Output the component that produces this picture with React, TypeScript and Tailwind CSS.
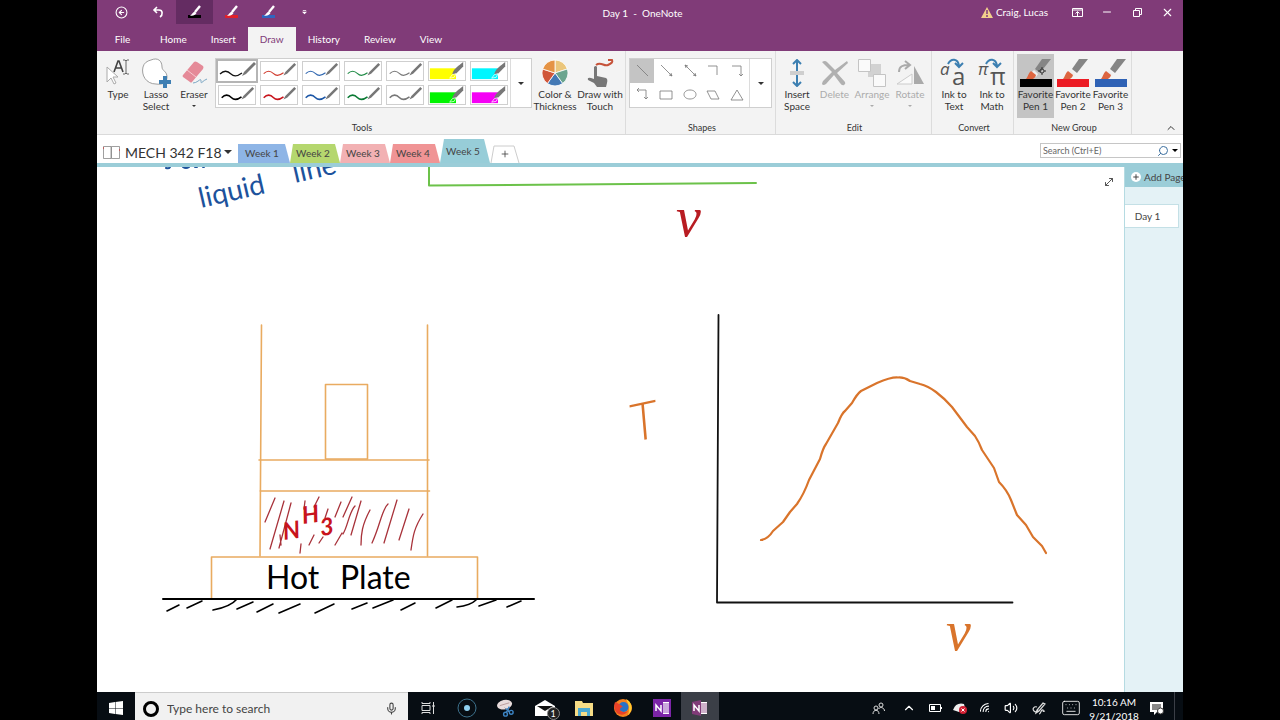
import React, { FunctionComponent, ReactNode } from "react";
import {
  ChevronUp,
  CircleArrowLeft,
  Keyboard,
  Mic,
  Minus,
  MoveDiagonal,
  Plus,
  Search,
  Volume2,
  Wifi,
  X,
} from "lucide-react";

const menuTabs = ["Home", "Insert", "Draw", "History", "Review", "View"];

const pens = [
  { color: "#111111", width: 1 },
  { color: "#d0392b", width: 1 },
  { color: "#2f66b0", width: 1 },
  { color: "#1d8a44", width: 1 },
  { color: "#777777", width: 1 },
  { color: "#ffff00", width: 0 },
  { color: "#00f6ff", width: 0 },
  { color: "#000000", width: 2 },
  { color: "#c8141c", width: 2 },
  { color: "#1b56a6", width: 2 },
  { color: "#0a7a34", width: 2 },
  { color: "#777777", width: 2 },
  { color: "#00f400", width: 0 },
  { color: "#f500f5", width: 0 },
];

const shapes = [
  "M7 6l11 11",
  "M7 6l11 11M17 14l1 3-3-1",
  "M7 6l11 11M17 14l1 3-3-1M8 9L7 6l3 1",
  "M7 7h9v9",
  "M7 7h9v10M14 15l2 2 2-2",
  "M7 7h9v9M9 5L7 7l2 2M14 14l2 2 2-2",
  "M6 8h12v8H6z",
  "M12 7c8 0 8 9 0 9s-8-9 0-9z",
  "M6 8h8l4 8h-8z",
  "M12 7l6 10H6z",
];

const weekTabs = [
  {
    label: "Week 1",
    className: "h-[19px] w-[52px] bg-[#8eb5e6] [clip-path:polygon(0_0,47px_0,100%_100%,0_100%)]",
  },
  {
    label: "Week 2",
    className: "h-[19px] w-[50px] bg-[#b5d76e] [clip-path:polygon(3px_0,45px_0,100%_100%,0_100%)]",
  },
  {
    label: "Week 3",
    className: "h-[19px] w-[50px] bg-[#f2b1b3] [clip-path:polygon(3px_0,45px_0,100%_100%,0_100%)]",
  },
  {
    label: "Week 4",
    className: "h-[19px] w-[50px] bg-[#f09495] [clip-path:polygon(3px_0,45px_0,100%_100%,0_100%)]",
  },
  {
    label: "Week 5",
    className: "h-6 w-[50px] bg-[#97cdd8] [clip-path:polygon(4px_0,44px_0,100%_100%,0_100%)]",
  },
];

const Caret: FunctionComponent<{ className?: string }> = ({ className }) => (
  <svg viewBox="0 0 8 4" className={className ?? "h-[3px] w-[6px]"}>
    <path d="M0 0h8L4 4z" fill="currentColor" />
  </svg>
);

const QuickPen: FunctionComponent<{ color: string }> = ({ color }) => (
  <svg viewBox="0 0 16 14" className="h-[14px] w-4">
    <rect x="1" y="10" width="13" height="3" fill={color} />
    <path d="M13 1l-5 6" stroke="#fff" strokeWidth="2.4" />
    <path d="M7.500 6.500l2 1.500C8 10.500 6 11 3 10.500c2-.8 2.500-3 4.500-4z" fill="#fff" />
  </svg>
);

const TitleBar: FunctionComponent = () => (
  <div className="flex h-[27px] items-start text-[10px] text-white">
    <div className="flex flex-1 pl-[5px]">
      <button aria-label="Back" className="flex h-6 w-[38px] items-center justify-center">
        <CircleArrowLeft size={13} strokeWidth={2} />
      </button>
      <button aria-label="Undo" className="flex h-6 w-9 items-center justify-center">
        <svg viewBox="0 0 12 12" className="h-3 w-3" fill="none" stroke="#fff" strokeWidth="1.600">
          <path d="M5 1L2 4l3 3M2 4h5c4 0 4 5 1 7" />
        </svg>
      </button>
      <button aria-label="Black pen" className="flex h-6 w-[37px] items-center justify-center bg-[#642c62]">
        <QuickPen color="#000" />
      </button>
      <button aria-label="Red pen" className="flex h-6 w-[37px] items-center justify-center">
        <QuickPen color="#e0202a" />
      </button>
      <button aria-label="Blue pen" className="flex h-6 w-[37px] items-center justify-center">
        <QuickPen color="#2f66c0" />
      </button>
      <button aria-label="Customize toolbar" className="flex h-6 w-[35px] items-center justify-center">
        <svg viewBox="0 0 6 6" className="h-[5px] w-[5px]" fill="#fff">
          <path d="M1 0h4v1H1zM0 2h6L3 5z" />
        </svg>
      </button>
    </div>
    <h1 className="pt-[5px] leading-4 whitespace-pre">Day 1  -  OneNote</h1>
    <div className="flex flex-1 justify-end">
      <div className="mr-[14px] flex h-6 items-center gap-[3px]">
        <svg viewBox="0 0 12 11" className="h-[11px] w-3">
          <path d="M6 0l6 11H0z" fill="#f3cf8c" />
          <path d="M6 3v4M6 8v2" stroke="#803b78" strokeWidth="1.500" />
        </svg>
        Craig, Lucas
      </div>
      <button aria-label="Ribbon display options" className="flex h-6 w-[30px] items-center justify-center">
        <svg viewBox="0 0 11 9" className="h-[9px] w-[11px]" fill="none" stroke="#fff">
          <path d="M.5.5h10v8H.5zM0 2h11M5.500 8V4M3.500 5.500l2-2 2 2" />
        </svg>
      </button>
      <button aria-label="Minimize" className="flex h-6 w-[30px] items-center justify-center">
        <Minus size={12} strokeWidth={2} />
      </button>
      <button aria-label="Restore" className="flex h-6 w-[30px] items-center justify-center">
        <svg viewBox="0 0 9 9" className="h-[9px] w-[9px]" fill="none" stroke="#fff">
          <path d="M.5 2.500h6v6h-6zM2.500 2.500v-2h6v6h-2" />
        </svg>
      </button>
      <button aria-label="Close" className="flex h-6 w-[31px] items-center justify-center">
        <X size={13} strokeWidth={2} />
      </button>
    </div>
  </div>
);

const MenuBar: FunctionComponent = () => (
  <nav className="flex h-6 text-[10px] text-white">
    <button className="w-[51px]">File</button>
    {menuTabs.map((tab) => (
      <button
        key={tab}
        className={tab === "Draw" ? "bg-[#f3f3f3] px-3 text-[#803b78]" : "px-3"}
      >
        {tab}
      </button>
    ))}
  </nav>
);

type ToolProps = {
  lines: string[];
  icon: ReactNode;
  className?: string;
  caret?: boolean;
};

const Tool: FunctionComponent<ToolProps> = ({ lines, icon, className, caret }) => (
  <button className={`flex h-16 flex-col items-center pt-[3px] text-[10px] leading-3 ${className ?? "w-[38px]"}`}>
    <span className="flex h-[31px] items-center justify-center">{icon}</span>
    {lines.map((line) => (
      <span key={line} className="whitespace-nowrap">
        {line}
      </span>
    ))}
    {caret && <Caret className="mt-[5px] h-[2px] w-1" />}
  </button>
);

const Group: FunctionComponent<{ label: string; children: ReactNode; className?: string }> = ({
  label,
  children,
  className,
}) => (
  <section className={`flex flex-col border-r border-[#dcdcdc] pt-[3px] ${className ?? ""}`}>
    <div className="flex flex-1 items-start">{children}</div>
    <h2 className="text-center text-[9px] leading-3">{label}</h2>
  </section>
);

const PenSwatch: FunctionComponent<{ color: string; width: number }> = ({ color, width }) => (
  <svg viewBox="0 0 38 20" className="h-full w-full">
    {width > 0 ? (
      <>
        <path
          d="M2 13c5-5 9-2 11 0 3 3 7 2 11-1"
          fill="none"
          stroke={color}
          strokeWidth={width === 1 ? 1.2 : 1.8}
        />
        <path d="M24 15l2-4L36 1l2 2-10 10z" fill="#777" />
      </>
    ) : (
      <>
        <path d="M0 7h29v12H0z" fill={color} />
        <path d="M25 14c0-4 3-7 12-14v5l-8 8z" fill="#777" />
        <path d="M22 18l3-4 4-1-2 4z" fill={color} stroke="#fff" strokeWidth=".8" />
      </>
    )}
  </svg>
);

const FavoritePen: FunctionComponent<{ color: string; gear?: boolean }> = ({ color, gear }) => (
  <svg viewBox="0 0 32 30" className="h-[30px] w-8">
    <path d="M22 1h9L20 15l-5-4z" fill="#858585" />
    <path d="M14 12l4 4-2 3-5-4z" fill="#eee" />
    <path d="M11 13l5 4c-1 4-5 6-11 5 3-2 3-7 6-9z" fill="#dd6540" />
    <rect y="21" width="32" height="8" fill={color} />
    {gear && (
      <g stroke="#333" fill="none">
        <circle cx="22" cy="13" r="2" />
        <path d="M22 9v2M22 15v2M18 13h2M24 13h2" />
      </g>
    )}
  </svg>
);

const ConvertIcon: FunctionComponent<{ letter: string }> = ({ letter }) => (
  <svg viewBox="0 0 32 30" className="h-[30px] w-8 overflow-visible">
    <g fill="#555" className="font-['Open_Sans',sans-serif]">
      <text x="2" y="17" className="text-[17px] italic">{letter}</text>
      <text x="14" y="27" className="text-[24px]">{letter}</text>
    </g>
    <path d="M10 6c3-6 10-6 11 2M17 5l4 4 4-4" fill="none" stroke="#3c7fb1" strokeWidth="2" />
  </svg>
);

const Ribbon: FunctionComponent = () => (
  <div className="flex h-[84px] border-b border-[#dadada] bg-[#f3f3f3] text-[#333]">
    <Group label="Tools" className="w-[529px] pl-[2px]">
      <Tool
        lines={["Type"]}
        icon={
          <svg viewBox="0 0 26 28" className="h-7 w-[26px]">
            <path d="M2 8v15l4-4 3 6 2-1-3-6h5z" fill="#fff" stroke="#aaa" />
            <path d="M9 13l4-11h1l4 11M11 9h5" fill="none" stroke="#444" strokeWidth="1.600" />
            <path d="M18 1h2l1 1 1-1h2M21 2v12M18 15h2l1-1 1 1h2" fill="none" stroke="#666" />
          </svg>
        }
      />
      <Tool
        lines={["Lasso", "Select"]}
        icon={
          <svg viewBox="0 0 30 30" className="h-[30px] w-[30px]">
            <path
              d="M10 2c7-3 11 1 11 7 0 4 5 4 5 10s-5 8-11 7C5 26 0 17 2 9c1-4 4-6 8-7z"
              fill="#fff"
              stroke="#888"
              strokeWidth=".8"
            />
            <path d="M24 18v12M18 24h12" stroke="#3f7fb3" strokeWidth="4" />
          </svg>
        }
      />
      <Tool
        lines={["Eraser"]}
        caret
        icon={
          <svg viewBox="0 0 28 28" className="h-7 w-7">
            <path d="M14 3q1-1 3 0l6 4q1 1 0 3L12 23q-1 1-2 0l-7-5q-1-1 0-2z" fill="#e58a98" />
            <path d="M7 11l9 7" stroke="#f6c8cf" />
            <path d="M13 24c5 0 8-6 8-2s1 0 6-2" fill="none" stroke="#7ba7c4" />
          </svg>
        }
      />
      <div className="mt-1 ml-[2px] flex h-[50px] w-[317px] shrink-0 border border-[#cfcfcf] bg-white">
        <div className="grid flex-1 grid-cols-7 grid-rows-2">
          {pens.map((pen, i) => (
            <button
              key={i}
              aria-label={`Pen ${i + 1}`}
              className={
                i === 0
                  ? "border-2 border-[#b5b5b5] bg-white"
                  : "m-[2px] border border-[#cfcfcf] bg-white"
              }
            >
              <PenSwatch color={pen.color} width={pen.width} />
            </button>
          ))}
        </div>
        <button aria-label="More pens" className="flex w-[21px] items-center justify-center border-l border-[#dcdcdc]">
          <Caret />
        </button>
      </div>
      <Tool
        lines={["Color &", "Thickness"]}
        className="w-[46px]"
        icon={
          <svg viewBox="-14 -14 28 28" className="h-7 w-7" stroke="#fff" strokeWidth=".8">
            <path d="M0 0V-13A13 13 0 0 1 12.400-4z" fill="#ebc67b" />
            <path d="M0 0L12.400-4A13 13 0 0 1 7.600 10.500z" fill="#6ba58e" />
            <path d="M0 0L7.600 10.500A13 13 0 0 1-7.600 10.500z" fill="#4479b5" />
            <path d="M0 0L-7.600 10.500A13 13 0 0 1-12.400-4z" fill="#d0563a" />
            <path d="M0 0L-12.400-4A13 13 0 0 1 0-13z" fill="#e59345" />
          </svg>
        }
      />
      <Tool
        lines={["Draw with", "Touch"]}
        className="w-11"
        icon={
          <svg viewBox="0 0 28 30" className="h-[30px] w-7">
            <path d="M8 9q2-2 3 0v9l9 2q2 1 1 5l-1 4h-9l-3-4-6-3q-1-3 3-2l3 1z" fill="#777" />
            <path d="M10 7c5-4 8 2 12 0s5-3 4-5h-4" fill="none" stroke="#c6533a" strokeWidth="2" />
          </svg>
        }
      />
    </Group>

    <Group label="Shapes" className="w-[150px] pl-[3px]">
      <div className="mt-1 flex h-[50px] w-[143px] border border-[#cfcfcf] bg-white">
        <div className="grid flex-1 grid-cols-5 grid-rows-2">
          {shapes.map((d, i) => (
            <button key={d} aria-label={`Shape ${i + 1}`} className={i === 0 ? "bg-[#c4c4c4]" : ""}>
              <svg viewBox="0 0 24 24" className="h-6 w-6" fill="none" stroke="#777" strokeWidth=".8">
                <path d={d} />
              </svg>
            </button>
          ))}
        </div>
        <button aria-label="More shapes" className="flex w-[22px] items-center justify-center border-l border-[#dcdcdc]">
          <Caret />
        </button>
      </div>
    </Group>

    <Group label="Edit" className="w-[156px] pl-[2px]">
      <Tool
        lines={["Insert", "Space"]}
        icon={
          <svg viewBox="0 0 16 28" className="h-7 w-4" fill="none" stroke="#3c7fb1" strokeWidth="2">
            <path d="M8 1v11M8 16v11M4 5l4-4 4 4M4 23l4 4 4-4" />
            <path d="M1 13h14M1 15h14" stroke="#aaa" strokeWidth="1" />
          </svg>
        }
      />
      <Tool
        lines={["Delete"]}
        className="w-[37px] text-[#ababab]"
        icon={
          <svg viewBox="0 0 28 28" className="h-7 w-7" fill="#b0b0b0">
            <path d="M1 3q3-2 5 0l8 8 12-9 1 2-11 10 8 9q1 2-1 3-2 1-4-2l-6-8-8 9q-3 2-4 0 0-1 1-3l9-9z" />
          </svg>
        }
      />
      <Tool
        lines={["Arrange"]}
        caret
        className="w-[38px] text-[#ababab]"
        icon={
          <svg viewBox="0 0 28 28" className="h-7 w-7">
            <path d="M10 5h13v13H10z" fill="#d2d2d2" />
            <path d="M.5.5h12v12H.5zM15.500 15.500h12v12h-12z" fill="#fafafa" stroke="#c4c4c4" />
          </svg>
        }
      />
      <Tool
        lines={["Rotate"]}
        caret
        className="w-[38px] text-[#ababab]"
        icon={
          <svg viewBox="0 0 28 26" className="h-[26px] w-7">
            <path d="M3 12c0-6 4-7 10-7M9 1l5 4-5 4" fill="none" stroke="#aaa" strokeWidth="2" />
            <path d="M16 14v10H1z" fill="#fafafa" stroke="#ccc" />
            <path d="M18 6v18h10z" fill="#aaa" />
          </svg>
        }
      />
    </Group>

    <Group label="Convert" className="w-[82px] pl-[3px]">
      <Tool lines={["Ink to", "Text"]} icon={<ConvertIcon letter="a" />} />
      <Tool lines={["Ink to", "Math"]} icon={<ConvertIcon letter="π" />} />
    </Group>

    <Group label="New Group" className="w-[118px] pl-[3px]">
      <Tool lines={["Favorite", "Pen 1"]} className="w-[37px] bg-[#c4c4c4]" icon={<FavoritePen color="#000" gear />} />
      <Tool lines={["Favorite", "Pen 2"]} icon={<FavoritePen color="#ec1c24" />} />
      <Tool lines={["Favorite", "Pen 3"]} className="w-[37px]" icon={<FavoritePen color="#2f62b5" />} />
    </Group>

    <div className="flex flex-1 items-end justify-end pr-[6px]">
      <button aria-label="Collapse the ribbon">
        <ChevronUp size={12} />
      </button>
    </div>
  </div>
);

const SectionBar: FunctionComponent = () => (
  <div className="flex h-8 items-end border-b-4 border-[#9bcdd8] bg-white text-[#444]">
    <button className="flex h-[22px] items-center pl-[6px] text-[14px] text-[#333]">
      <svg viewBox="0 0 17 13" className="mr-[5px] h-[13px] w-[17px]" fill="#fff" stroke="#777" strokeWidth=".7">
        <path d="M.5.5h7.500v12H.5zM8.500.5h8v12h-8z" />
        <path d="M16.500 3v2M.5 1v2" stroke="#c44" />
      </svg>
      <span className="w-[99px] text-left whitespace-nowrap">MECH 342 F18</span>
      <Caret className="h-1 w-2" />
    </button>
    <div className="ml-[6px] flex items-end text-[10px]">
      {weekTabs.map((tab) => (
        <button key={tab.label} className={`pr-1 ${tab.className}`}>
          {tab.label}
        </button>
      ))}
      <button aria-label="New section" className="relative flex h-[18px] w-[30px] items-center justify-center">
        <svg viewBox="0 0 30 18" className="absolute inset-0 h-full w-full" fill="none" stroke="#ccc">
          <path d="M1 18L4 1h20l5 17" />
        </svg>
        <Plus size={10} />
      </button>
    </div>
    <label className="mr-[2px] mb-[5px] ml-auto flex h-[15px] w-[141px] items-center gap-[3px] border border-[#c6c6c6] px-[2px]">
      <input
        type="search"
        aria-label="Search"
        placeholder="Search (Ctrl+E)"
        className="w-0 flex-1 text-[9px] outline-none placeholder:text-[#666]"
      />
      <Search size={12} className="-scale-x-100 text-[#3c6f9f]" />
      <Caret className="h-[3px] w-[6px] text-black" />
    </label>
  </div>
);

// hatch marks inside the cylinder
const gasHatch =
  "M275 498l-10 24M284 501l-14 48M291 503l-12 45M305 501l-1 8M319 497l-5 10M328 509l-3 9M341 502l-6 15M352 497l-9 20M355 506c-6 6-7 20-12 28M361 501l-10 34M370 510c-8 15-9 24-9 35M342 533l-7 12M388 504c-6 5-8 22-16 39M397 500l-13 43M409 509l-10 31M423 514c-9 14-10 22-12 36M314 535l-5 10M323 537l-4 6M301 544l-1 9M280 535l1 10";

const groundHatch =
  "M179 605l-12 6M202 601l-15 7M237 599c-5 6-13 9-24 11M253 602l-16 7M273 604l-16 8M300 604l-21 9M334 604l-19 9M367 603l-15 6M393 600l-20 8M415 603l-14 7M452 600l-16 8M476 600c-4 4-10 6-19 7M496 600l-17 6M521 601l-14 6";

const InkPage: FunctionComponent = () => (
  <div className="relative flex-1 bg-white">
    <svg
      viewBox="97 167 1027 525"
      className="block h-auto w-full"
      fill="none"
      strokeLinecap="round"
      strokeLinejoin="round"
    >
      <path d="M166 168q3 1 4-1M183 167q3 2 6 0M195 167h2M203 167h1" stroke="#1d529c" strokeWidth="2" />
      <g fill="#1d529c" className="font-['Lato',sans-serif] text-[28px]">
        <text x="201" y="208" transform="rotate(-13 201 208)">liquid</text>
        <text x="295" y="183" transform="rotate(-13 295 183)">line</text>
      </g>

      <path d="M429 167v18.500l327-2.500" stroke="#6cc24a" strokeWidth="2" />
      <g className="font-['Liberation_Serif',serif] text-[56px] italic">
        <text x="676" y="236" fill="#b81c22">v</text>
        <text x="946" y="650" fill="#d9742b">v</text>
      </g>

      <g stroke="#e9ab60" strokeWidth="1.600">
        <path d="M261.500 325L260 556M427.500 325v231M259 460h170M260 491h169.500" />
        <path d="M325.500 384.500h42V459h-42zM211.500 598v-41h266v41" />
      </g>
      <path d={gasHatch} stroke="#a8323a" strokeWidth="1.300" />
      <g fill="#c8141c" className="font-['Lato',sans-serif] text-[24px] font-bold italic">
        <text x="284" y="540" transform="rotate(-8 284 540)">N</text>
        <text x="303" y="524" transform="rotate(-8 303 524)">H</text>
        <text x="321" y="536" transform="rotate(-8 321 536)">3</text>
      </g>
      <g fill="#000" className="font-['Lato',sans-serif] text-[32px]">
        <text x="266" y="589">Hot</text>
        <text x="340" y="589">Plate</text>
      </g>
      <path d="M163 599h371" stroke="#000" strokeWidth="2" />
      <path d={groundHatch} stroke="#000" strokeWidth="1.600" />

      <text
        x="634"
        y="442"
        fill="#d9742b"
        className="font-['Lato',sans-serif] text-[52px] font-light italic"
        transform="rotate(-12 634 442)"
      >
        T
      </text>
      <path d="M718.500 315L717 602.500h295.500" stroke="#111" strokeWidth="1.800" />
      <path
        d="M761 540Q768 539 773 531L783 522 790 512 797 504Q804 494 809 480L820 459Q823 448 826 444L838 423Q842 413 845 411L852 403Q857 394 861 391L877 383Q891 377 898 377.500 904 377 910 381L920 384Q928 386 936 392 944 398 952 407L967 427 975 436Q979 442 982 450L994 468 999 482Q1007 490 1011 500L1017 515 1026 525 1033 537 1042 546 1046 553"
        stroke="#d9742b"
        strokeWidth="2.200"
      />
    </svg>
    <button aria-label="Full page view" className="absolute top-[9px] right-[9px] text-[#555]">
      <MoveDiagonal size={12} />
    </button>
  </div>
);

const PageList: FunctionComponent = () => (
  <aside className="w-[59px] overflow-hidden border-l border-[#b5dbe2] bg-[#e4f2f6] text-[10px] text-[#444]">
    <button className="flex h-5 w-full items-center gap-[3px] bg-[#9bcdd8] pl-[6px] whitespace-nowrap">
      <span className="flex h-[10px] w-[10px] shrink-0 items-center justify-center rounded-full bg-white">
        <Plus size={8} strokeWidth={3} />
      </span>
      Add Page
    </button>
    <button className="mt-[17px] h-6 w-[54px] border border-l-0 border-[#c4e0e6] bg-white pr-2">Day 1</button>
  </aside>
);

type TaskProps = { label: string; children: ReactNode; className?: string };

const TaskButton: FunctionComponent<TaskProps> = ({ label, children, className }) => (
  <button aria-label={label} className={`flex shrink-0 items-center justify-center pt-1 ${className ?? "w-[39px]"}`}>
    {children}
  </button>
);

const OneNoteLogo: FunctionComponent<{ color: string; page: string }> = ({ color, page }) => (
  <span className={`flex h-[18px] w-[18px] items-center ${page}`}>
    <svg viewBox="0 0 18 18" className="h-[18px] w-[18px]">
      <path d="M9 3h7v12H9z" fill="#fff" />
      <path d="M10 5h4M10 7h4M10 9h4M10 11h4M10 13h4M15 4v10" stroke={color} strokeWidth=".8" />
      <path d="M1 3l9-2v16l-9-2z" fill={color} />
      <path d="M3 12V6l5 6V6" fill="none" stroke="#fff" strokeWidth="1.500" />
    </svg>
  </span>
);

const Taskbar: FunctionComponent = () => (
  <footer className="flex h-7 overflow-hidden bg-[#070d13] text-white">
    <TaskButton label="Start" className="w-[38px]">
      <svg viewBox="0 0 14 14" className="h-[14px] w-[14px]" fill="#fff">
        <path d="M0 2l6-1v6H0zM6.500 1l7.500-1v7H6.500zM0 7.500h6V13l-6-1zM6.500 7.500H14V14l-7.500-1z" />
      </svg>
    </TaskButton>
    <label className="flex w-[273px] items-center border-t border-[#ccc] bg-[#f1f1f1] pt-1 pr-[10px] pl-[8px] text-[#444]">
      <span className="h-4 w-4 rounded-full border-[3px] border-black" />
      <input
        type="text"
        aria-label="Type here to search"
        placeholder="Type here to search"
        className="ml-2 w-0 flex-1 text-[12px] outline-none placeholder:text-[#444]"
      />
      <Mic size={13} />
    </label>
    <TaskButton label="Task view">
      <svg viewBox="0 0 14 12" className="h-3 w-[14px]" fill="none" stroke="#ddd">
        <path d="M1 3.500h8v5H1zM1 0v1.500h8V0M1 12v-1.500h8V12M12.500 0v12M11 4h3" />
      </svg>
    </TaskButton>
    <TaskButton label="Cortana device">
      <svg viewBox="0 0 20 20" className="h-5 w-5">
        <circle cx="10" cy="10" r="9" fill="none" stroke="#3d718c" />
        <circle cx="10" cy="10" r="3" fill="#8fd0f0" />
      </svg>
    </TaskButton>
    <TaskButton label="Snipping tool">
      <svg viewBox="0 0 20 20" className="h-[19px] w-[19px]">
        <ellipse cx="9" cy="6" rx="8" ry="5" fill="#e8dcdc" transform="rotate(-12 9 6)" />
        <path d="M4 7l10-3M9 9l5 5M14 9l-3 5" stroke="#b89a9a" />
        <g fill="none" stroke="#3c84c4" strokeWidth="1.500">
          <circle cx="10" cy="16" r="2" />
          <circle cx="16" cy="14" r="2" />
          <path d="M11 14l3-6M14 13l-4-3" />
        </g>
      </svg>
    </TaskButton>
    <TaskButton label="Mail, 1 new">
      <span className="relative">
        <svg viewBox="0 0 20 16" className="h-4 w-5">
          <path d="M0 6l10-6 10 6v10H0z" fill="#fff" />
          <path d="M2 6h16l-8 5z" fill="#111" />
        </svg>
        <span className="absolute top-[7px] left-3 h-[13px] w-[13px] rounded-full border border-[#888] bg-[#222] text-center text-[9px] leading-[11px]">
          1
        </span>
      </span>
    </TaskButton>
    <TaskButton label="File Explorer">
      <svg viewBox="0 0 18 15" className="h-[15px] w-[18px]">
        <path d="M0 0h7l1 2h10v13H0z" fill="#f6dc86" />
        <path d="M3 7h12v8h-3v-4H6v4H3z" fill="#4ba9d2" />
      </svg>
    </TaskButton>
    <TaskButton label="Firefox">
      <svg viewBox="0 0 18 18" className="h-[18px] w-[18px]">
        <circle cx="9" cy="9" r="9" fill="#f5811f" />
        <path d="M12 0c6 3 8 11 2 16 2-5 1-10-2-16z" fill="#ffcb2f" />
        <circle cx="9.500" cy="8" r="5" fill="#2872c8" />
        <path d="M1 3c3 1 6 3 8 5-2 0-3 1-3 3 2 3 6 2 8 1-3 5-11 5-13-1-1-3-1-5 0-8z" fill="#e94128" />
      </svg>
    </TaskButton>
    <TaskButton label="OneNote">
      <OneNoteLogo color="#7c25a8" page="bg-[#7c25a8]" />
    </TaskButton>
    <TaskButton label="OneNote 2016" className="w-[38px] bg-[#3b3f47]">
      <OneNoteLogo color="#803b78" page="" />
    </TaskButton>
    <div className="ml-auto flex shrink-0">
      <TaskButton label="People" className="w-8">
        <svg viewBox="0 0 13 13" className="h-[13px] w-[13px]" fill="none" stroke="#ddd">
          <circle cx="9" cy="3" r="2" />
          <circle cx="4" cy="6" r="2" />
          <path d="M1 12c0-5 6-5 6 0M6.500 7c2-3 6-1 6 2" />
        </svg>
      </TaskButton>
      <TaskButton label="Show hidden icons" className="w-[29px]">
        <ChevronUp size={14} />
      </TaskButton>
      <TaskButton label="Battery" className="w-6">
        <svg viewBox="0 0 13 8" className="h-2 w-[13px]">
          <path d="M.5.5h11v7H.5z" fill="none" stroke="#fff" />
          <path d="M2 2h4v4H2zM12 3h1v2h-1z" fill="#fff" />
        </svg>
      </TaskButton>
      <TaskButton label="OneDrive sync error" className="w-[26px]">
        <svg viewBox="0 0 14 12" className="h-3 w-[14px]">
          <path d="M0 8Q3 0 11 2l1 4-6 4z" fill="#eee" />
          <circle cx="10" cy="8" r="4" fill="#d21f33" />
          <path d="M8.500 6.500l3 3M11.500 6.500l-3 3" stroke="#fff" />
        </svg>
      </TaskButton>
      <TaskButton label="Network" className="w-[25px]">
        <Wifi size={13} className="-rotate-45" />
      </TaskButton>
      <TaskButton label="Volume" className="w-[26px]">
        <Volume2 size={14} />
      </TaskButton>
      <TaskButton label="Windows Ink" className="w-[30px]">
        <svg viewBox="0 0 14 13" className="h-[13px] w-[14px]" fill="none" stroke="#ddd" strokeWidth="1.200">
          <path d="M5 5C2 4 0 7 2 9s4 0 4-2M4 11l1-3 6-7 2 1-6 7zM7 12c2 0 2-5 4-4 1 1-1 2 2 1" />
        </svg>
      </TaskButton>
      <TaskButton label="Touch keyboard" className="w-[34px]">
        <Keyboard size={20} strokeWidth={1} />
      </TaskButton>
      <div className="w-[52px] shrink-0 pt-[3px] text-center text-[10px] leading-[14px]">
        <div>10:16 AM</div>
        <div>9/21/2018</div>
      </div>
      <TaskButton label="Notifications" className="w-[34px]">
        <svg viewBox="0 0 14 13" className="h-[13px] w-[14px]">
          <path d="M0 0h13v10H7l-3 3v-3H0z" fill="#fff" />
          <path d="M2 3h9M2 5h9M2 7h6" stroke="#111" />
          <circle cx="10.500" cy="9" r="3" fill="#fff" stroke="#333" />
        </svg>
      </TaskButton>
      <div className="w-[9px] border-l border-[#3b3f47]" />
    </div>
  </footer>
);

const App: FunctionComponent = () => (
  <div className="min-h-screen bg-black px-[97px] font-['Lato','Open_Sans',sans-serif]">
    <main className="flex min-h-screen flex-col overflow-hidden bg-white">
      <header className="bg-[#803b78]">
        <TitleBar />
        <MenuBar />
      </header>
      <Ribbon />
      <SectionBar />
      <div className="flex flex-1">
        <InkPage />
        <PageList />
      </div>
      <Taskbar />
    </main>
  </div>
);

export default App;
